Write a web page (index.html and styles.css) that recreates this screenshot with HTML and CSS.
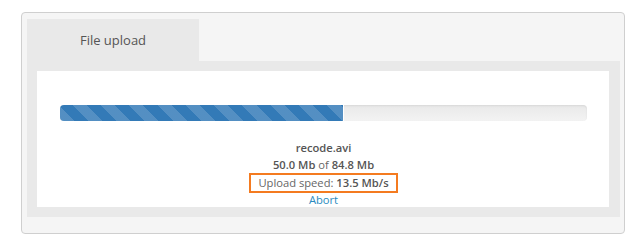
FILE: index.html
```html
<!DOCTYPE html>
<html>
<head>
<meta charset="utf-8">
<link rel="stylesheet" href="styles.css">
</head>
<body>
<div class="page">
  <div class="panel">
    <div class="tabs">
      <div class="tab">File upload</div>
    </div>
    <div class="frame">
      <div class="content">
        <div class="progress"><div class="bar" style="width:53.7%"></div></div>
        <div class="info">
          <div class="line name">recode.avi</div>
          <div class="line"><b>50.0 Mb</b> of <b>84.8 Mb</b></div>
          <div class="line"><span class="speed">Upload speed: <b>13.5 Mb/s</b></span></div>
          <div class="line abort"><a href="#">Abort</a></div>
        </div>
      </div>
    </div>
  </div>
</div>
</body>
</html>
```
FILE: styles.css
```css
html, body {
  margin: 0;
  padding: 0;
  background: #ffffff;
}
body {
  font-family: "Open Sans", "Noto Sans", Arial, sans-serif;
  color: #666666;
}
.page {
  padding: 12px 14px 0 21px;
}
.panel {
  width: 593px;
  border: 1px solid #cfcfcf;
  border-radius: 4px;
  background: #f5f5f5;
  padding: 6px 4px 16px 5px;
}
.tabs {
  display: flex;
}
.tab {
  width: 172px;
  height: 42px;
  background: #e9e9e9;
  display: flex;
  align-items: center;
  justify-content: center;
  font-size: 13px;
  color: #555555;
}
.frame {
  background: #e9e9e9;
  padding: 10px 11px 10px 10px;
}
.content {
  background: #ffffff;
  padding: 34px 22px 0 23px;
  height: 102px;
}
.progress {
  height: 16px;
  border-radius: 4px;
  background: linear-gradient(#e9e9e9, #f3f3f3);
  box-shadow: inset 0 1px 2px rgba(0,0,0,0.08);
  overflow: hidden;
}
.bar {
  height: 100%;
  background-color: #337ab7;
  background-image: repeating-linear-gradient(45deg, rgba(255,255,255,0.16) 0 10px, transparent 10px 20px);
  box-shadow: 1px 0 0 #ffffff;
}
.info {
  margin-top: 18px;
  text-align: center;
  font-size: 11.2px;
}
.line {
  line-height: 17px;
}
.name {
  font-weight: 600;
  color: #555555;
}
b {
  font-weight: 600;
  color: #555555;
}
.speed {
  display: inline-block;
  border: 2px solid #f47b20;
  line-height: 16px;
  padding: 0 7px;
}
.abort {
  line-height: 14px;
}
.abort a {
  color: #2a8bc0;
  text-decoration: none;
}
```
